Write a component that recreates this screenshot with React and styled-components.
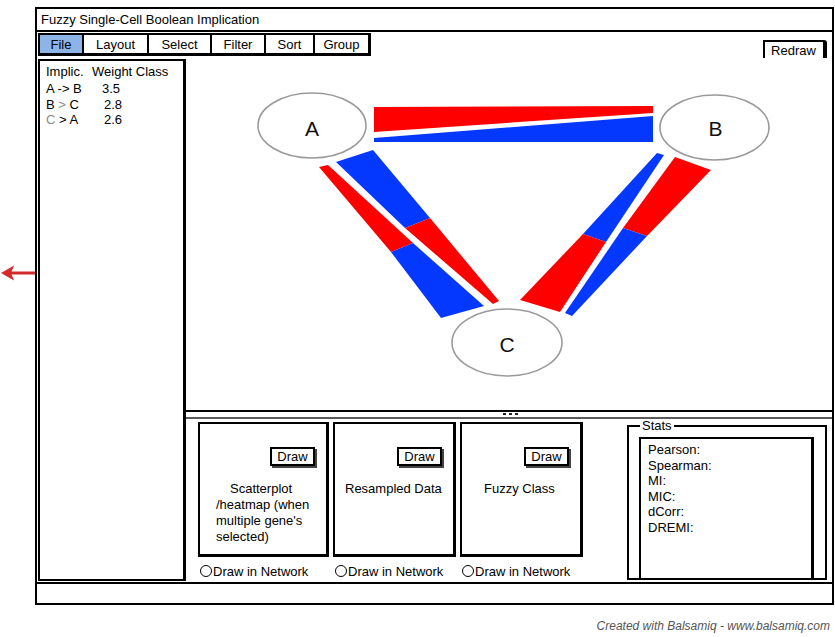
import React from "react";
import styled, { createGlobalStyle } from "styled-components";

const Global = createGlobalStyle`
  *, *::before, *::after { box-sizing: border-box; }
  html, body { margin: 0; padding: 0; background: #fff; }
  body {
    font-family: "Liberation Sans", Arial, sans-serif;
    font-size: 13px;
    color: #000;
  }
`;

const Page = styled.div`
  width: 835px;
  height: 637px;
  padding-top: 7px;
  display: flex;
  flex-direction: column;
  overflow: hidden;
`;

const Row = styled.div`
  display: flex;
`;

const ArrowSlot = styled.div`
  width: 35px;
  flex-shrink: 0;
  padding-top: 257px;
  svg { display: block; }
`;

const Window = styled.div`
  width: 799px;
  height: 598px;
  border: 2px solid #000;
  display: flex;
  flex-direction: column;
  background: #fff;
`;

const TitleBar = styled.div`
  height: 23px;
  border-bottom: 2px solid #000;
  padding-left: 4px;
  display: flex;
  align-items: center;
  white-space: nowrap;
`;

const MenuRow = styled.div`
  height: 26px;
  display: flex;
  align-items: flex-start;
  padding-left: 1px;
  padding-right: 5px;
`;

const TabBar = styled.div`
  margin-top: 1px;
  display: flex;
  border: 2px solid #000;
  border-right-width: 3px;
  border-bottom-width: 3px;
`;

const Tab = styled.div`
  width: ${(p) => p.$w}px;
  height: 18px;
  display: flex;
  align-items: center;
  justify-content: center;
  border-left: ${(p) => (p.$first ? "none" : "2px solid #000")};
  background: ${(p) => (p.$active ? "#8cb4e6" : "#fff")};
`;

const Redraw = styled.div`
  margin-left: auto;
  align-self: flex-end;
  width: 64px;
  height: 18px;
  display: flex;
  align-items: center;
  justify-content: center;
  padding-right: 1px;
  border: 2px solid #000;
  border-right-width: 4px;
  border-bottom: none;
  border-top-right-radius: 3px;
`;

const Main = styled.div`
  flex: 1;
  display: flex;
  min-height: 0;
`;

const LeftPanel = styled.div`
  width: 148px;
  margin: 1px 0 1px 1px;
  border: 2px solid #000;
  border-right-width: 3px;
  padding: 3px 6px;
  line-height: 15.5px;
`;

const ListHeader = styled.div`
  display: flex;
  margin-bottom: 1px;
  height: 16px;
  align-items: center;
`;

const HeadCell = styled.span`
  width: ${(p) => p.$w}px;
`;

const ListRow = styled.div`
  display: flex;
`;

const KeyCell = styled.span`
  width: 56px;
`;

const ValCell = styled.span`
  padding-left: ${(p) => p.$pad}px;
`;

const Dim = styled.span`
  color: #8a8a8a;
`;

const RightCol = styled.div`
  flex: 1;
  display: flex;
  flex-direction: column;
  min-width: 0;
`;

const Canvas = styled.div`
  height: 352px;
  svg { display: block; }
`;

const Splitter = styled.div`
  height: 9px;
  border-top: 2px solid #000;
  border-bottom: 2px solid #5a5a5a;
  display: flex;
  justify-content: center;
  gap: 3px;
  padding-top: 1px;
  padding-left: 2px;
`;

const Dot = styled.span`
  width: 3px;
  height: 2px;
  background: #222;
`;

const BottomPanel = styled.div`
  flex: 1;
  display: flex;
  align-items: flex-start;
  padding-left: 12px;
  padding-right: 5px;
`;

const Cards = styled.div`
  display: flex;
  gap: 4px;
  margin-top: 3px;
`;

const CardCol = styled.div`
  display: flex;
  flex-direction: column;
  gap: 8px;
`;

const Card = styled.div`
  width: ${(p) => p.$w}px;
  height: 135px;
  border: 2px solid #000;
  border-right-width: 3px;
  border-bottom-width: 3px;
  display: flex;
  flex-direction: column;
  padding-top: 23px;
`;

const DrawButton = styled.div`
  align-self: flex-end;
  margin-right: 11px;
  width: 45px;
  height: 19px;
  border: 2px solid #000;
  box-shadow: 2px 2px 0 #444;
  display: flex;
  align-items: center;
  justify-content: center;
`;

const CardLabel = styled.div`
  margin-top: 15px;
  padding-left: ${(p) => p.$pad}px;
  line-height: 16px;
`;

const Indent = styled.span`
  padding-left: ${(p) => p.$w}px;
`;

const Radio = styled.div`
  display: flex;
  align-items: center;
  gap: 1px;
  height: 12px;
  padding-left: 2px;
  white-space: nowrap;
`;

const RadioCircle = styled.span`
  width: 12px;
  height: 12px;
  border: 1.5px solid #000;
  border-radius: 50%;
  flex-shrink: 0;
`;

const StatsGroup = styled.fieldset`
  margin: 0 0 0 auto;
  min-width: 0;
  width: 200px;
  border: 2px solid #000;
  padding: 0 11px 0 10px;
`;

const StatsLegend = styled.legend`
  padding: 0 2px;
  margin-left: 1px;
  line-height: 14px;
`;

const StatsBox = styled.div`
  margin-top: 4px;
  height: 141px;
  border: 2px solid #000;
  border-right-width: 3px;
  border-bottom: none;
  padding: 3px 7px;
  line-height: 15.5px;
`;

const StatusBar = styled.div`
  height: 21px;
  border-top: 2px solid #000;
`;

const Footer = styled.div`
  margin-top: 14px;
  padding-right: 5px;
  text-align: right;
  font-family: "Liberation Sans", Arial, sans-serif;
  font-style: italic;
  font-size: 12px;
  line-height: 14px;
  color: #555;
`;

const RED = "#ff0000";
const BLUE = "#0538ff";

const pts = (a) => a.map((p) => p.join(",")).join(" ");

const edges = [
  // A - B
  { c: RED, p: [[374, 107], [653, 106], [653, 113], [374, 132]] },
  { c: BLUE, p: [[374, 138], [653, 116], [653, 142], [374, 142]] },
  // A - C left band
  { c: RED, p: [[319, 167], [328, 165], [413, 243], [391, 252]] },
  { c: BLUE, p: [[391, 252], [413, 243], [484, 306], [441, 318]] },
  // A - C right band
  { c: BLUE, p: [[336, 162], [373, 150], [430, 218], [405, 228]] },
  { c: RED, p: [[405, 228], [430, 218], [499, 301], [493, 304]] },
  // B - C upper-left band
  { c: BLUE, p: [[657, 153], [664, 155], [606, 242], [583, 234]] },
  { c: RED, p: [[583, 234], [606, 242], [560, 312], [520, 300]] },
  // B - C lower-right band
  { c: RED, p: [[675, 157], [711, 170], [647, 236], [623, 228]] },
  { c: BLUE, p: [[623, 228], [647, 236], [572, 316], [565, 313]] },
];

const nodes = [
  { id: "A", cx: 312, cy: 125.5, rx: 54, ry: 32.5, tx: 312, ty: 128 },
  { id: "B", cx: 714.5, cy: 127.5, rx: 54.5, ry: 32.5, tx: 715.5, ty: 128 },
  { id: "C", cx: 507, cy: 342.5, rx: 55, ry: 33.5, tx: 507, ty: 344 },
];

function Graph() {
  return (
    <svg width="646" height="352" viewBox="0 0 646 352">
      <g transform="translate(-186,-58)">
        {edges.map((e, i) => (
          <polygon key={i} points={pts(e.p)} fill={e.c} />
        ))}
        {nodes.map((n) => (
          <g key={n.id}>
            <ellipse cx={n.cx} cy={n.cy} rx={n.rx} ry={n.ry} fill="#fff" stroke="#9a9a9a" strokeWidth="1.6" />
            <text
              x={n.tx}
              y={n.ty}
              textAnchor="middle"
              dominantBaseline="central"
              fontFamily="'Liberation Sans', Arial, sans-serif"
              fontSize="21"
              fill="#111"
            >
              {n.id}
            </text>
          </g>
        ))}
      </g>
    </svg>
  );
}

function BackArrow() {
  return (
    <svg width="35" height="18" viewBox="0 0 35 18">
      <line x1="10" y1="9" x2="35" y2="9" stroke="#d32a2a" strokeWidth="3" />
      <polygon points="1,9 14,1.5 11,9 14,16.5" fill="#d32a2a" />
    </svg>
  );
}

const tabs = [
  { label: "File", w: 42, active: true },
  { label: "Layout", w: 65 },
  { label: "Select", w: 63 },
  { label: "Filter", w: 54 },
  { label: "Sort", w: 49 },
  { label: "Group", w: 55 },
];

function CardBlock({ w, pad, children }) {
  return (
    <CardCol>
      <Card $w={w}>
        <DrawButton>Draw</DrawButton>
        <CardLabel $pad={pad}>{children}</CardLabel>
      </Card>
      <Radio>
        <RadioCircle />
        Draw in Network
      </Radio>
    </CardCol>
  );
}

export default function App() {
  return (
    <>
      <Global />
      <Page>
        <Row>
          <ArrowSlot>
            <BackArrow />
          </ArrowSlot>
          <Window>
            <TitleBar>Fuzzy Single-Cell Boolean Implication</TitleBar>
            <MenuRow>
              <TabBar>
                {tabs.map((t, i) => (
                  <Tab key={t.label} $w={t.w} $first={i === 0} $active={t.active}>
                    {t.label}
                  </Tab>
                ))}
              </TabBar>
              <Redraw>Redraw</Redraw>
            </MenuRow>
            <Main>
              <LeftPanel>
                <ListHeader>
                  <HeadCell $w={46}>Implic.</HeadCell>
                  <span>Weight Class</span>
                </ListHeader>
                <ListRow>
                  <KeyCell>A -&gt; B</KeyCell>
                  <ValCell $pad={0}>3.5</ValCell>
                </ListRow>
                <ListRow>
                  <KeyCell>
                    B <Dim>&gt;</Dim> C
                  </KeyCell>
                  <ValCell $pad={2}>2.8</ValCell>
                </ListRow>
                <ListRow>
                  <KeyCell>
                    <Dim>C</Dim> &gt; A
                  </KeyCell>
                  <ValCell $pad={2}>2.6</ValCell>
                </ListRow>
              </LeftPanel>
              <RightCol>
                <Canvas>
                  <Graph />
                </Canvas>
                <Splitter>
                  <Dot />
                  <Dot />
                  <Dot />
                </Splitter>
                <BottomPanel>
                  <Cards>
                    <CardBlock w={131} pad={16}>
                      <Indent $w={14}>Scatterplot</Indent>
                      <br />
                      /heatmap (when
                      <br />
                      multiple gene's
                      <br />
                      selected)
                    </CardBlock>
                    <CardBlock w={123} pad={10}>
                      Resampled Data
                    </CardBlock>
                    <CardBlock w={123} pad={22}>
                      Fuzzy Class
                    </CardBlock>
                  </Cards>
                  <StatsGroup>
                    <StatsLegend>Stats</StatsLegend>
                    <StatsBox>
                      <div>Pearson:</div>
                      <div>Spearman:</div>
                      <div>MI:</div>
                      <div>MIC:</div>
                      <div>dCorr:</div>
                      <div>DREMI:</div>
                    </StatsBox>
                  </StatsGroup>
                </BottomPanel>
              </RightCol>
            </Main>
            <StatusBar />
          </Window>
        </Row>
        <Footer>Created with Balsamiq - www.balsamiq.com</Footer>
      </Page>
    </>
  );
}
